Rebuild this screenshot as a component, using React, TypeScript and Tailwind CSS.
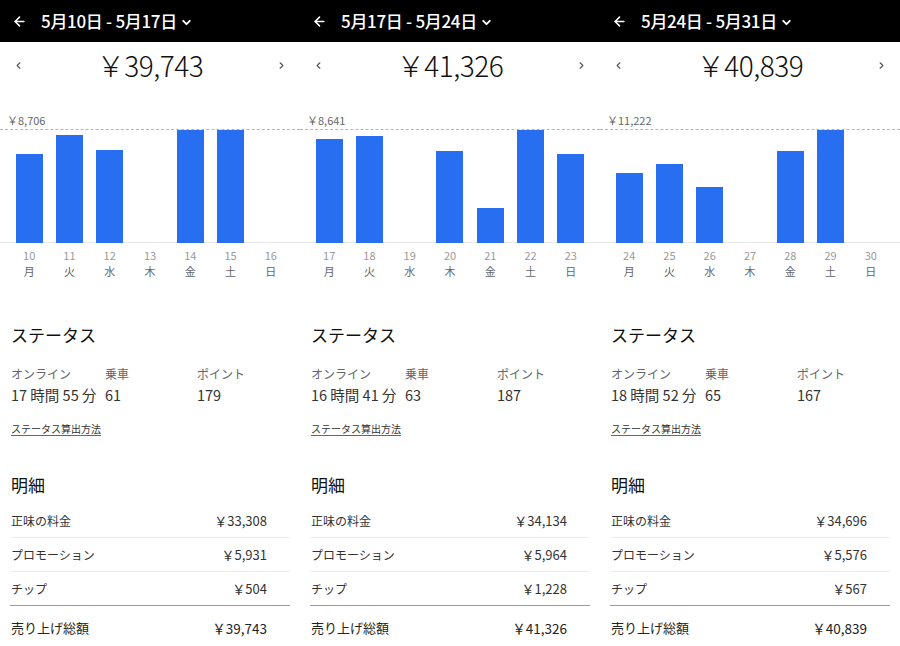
import React from "react";
import { ArrowLeft, ChevronDown, ChevronLeft, ChevronRight } from "lucide-react";

interface WeekData {
  title: string;
  total: string;
  max: string;
  days: number[];
  bars: number[]; // bar heights in px, 113 = max
  online: string;
  rides: string;
  points: string;
  fare: string;
  promo: string;
  tip: string;
}

const weekdays = ["月", "火", "水", "木", "金", "土", "日"];

const weeks: WeekData[] = [
  {
    title: "5月10日 - 5月17日",
    total: "39,743",
    max: "8,706",
    days: [10, 11, 12, 13, 14, 15, 16],
    bars: [89, 108, 93, 0, 113, 113, 0],
    online: "17 時間 55 分",
    rides: "61",
    points: "179",
    fare: "33,308",
    promo: "5,931",
    tip: "504",
  },
  {
    title: "5月17日 - 5月24日",
    total: "41,326",
    max: "8,641",
    days: [17, 18, 19, 20, 21, 22, 23],
    bars: [104, 107, 0, 92, 35, 113, 89],
    online: "16 時間 41 分",
    rides: "63",
    points: "187",
    fare: "34,134",
    promo: "5,964",
    tip: "1,228",
  },
  {
    title: "5月24日 - 5月31日",
    total: "40,839",
    max: "11,222",
    days: [24, 25, 26, 27, 28, 29, 30],
    bars: [70, 79, 56, 0, 92, 113, 0],
    online: "18 時間 52 分",
    rides: "65",
    points: "167",
    fare: "34,696",
    promo: "5,576",
    tip: "567",
  },
];

const Row = ({ label, value, last }: { label: string; value: string; last?: boolean }) => (
  <div
    className={
      last
        ? "flex h-[34px] items-center justify-between border-b border-[#9a9a9a] pl-[1px] pr-[23px]"
        : "flex h-[34px] items-center justify-between border-b border-[#ececec] pl-[1px] pr-[23px]"
    }
  >
    <span className="text-[12px] text-[#333]">{label}</span>
    <span className="text-[13px] text-[#333]">￥{value}</span>
  </div>
);

const Panel = ({ week }: { week: WeekData }) => (
  <div className="w-[300px] shrink-0 bg-white">
    {/* header */}
    <div className="flex h-[42px] items-center bg-black pl-[12px] text-white">
      <ArrowLeft size={15} strokeWidth={2.5} />
      <span className="ml-[14px] text-[17px] font-medium tracking-[-0.3px]">{week.title}</span>
      <ChevronDown size={13} strokeWidth={3.5} className="ml-[3px] mt-[2px]" />
    </div>

    {/* amount */}
    <div className="flex h-[46px] items-center justify-between px-[13px] text-[#555]">
      <ChevronLeft size={11} strokeWidth={2.5} />
      <span className="text-[28px] font-light tracking-[-0.5px] text-[#111]">￥{week.total}</span>
      <ChevronRight size={11} strokeWidth={2.5} />
    </div>

    {/* chart */}
    <div className="pt-[26px]">
      <div className="px-[7px] text-[11px] leading-[13px] text-[#666]">￥{week.max}</div>
      <div className="mt-[2px] grid h-[114px] grid-cols-7 items-end border-t border-b border-t-[#b5b5b5] border-b-[#e6e6e6] px-[9px] [border-top-style:dashed]">
        {week.bars.map((h, i) => (
          <div key={i} className="flex justify-center">
            {h > 0 && <div className="w-[27px] bg-[#276ef1]" style={{ height: h }} />}
          </div>
        ))}
      </div>
      <div className="grid grid-cols-7 px-[9px] pt-[4px]">
        {week.days.map((d, i) => (
          <div key={d} className="flex flex-col items-center text-[11px] leading-[16px]">
            <span className="text-[#999]">{d}</span>
            <span className="text-[#666]">{weekdays[i]}</span>
          </div>
        ))}
      </div>
    </div>

    {/* status */}
    <div className="px-[10px]">
      <div className="mt-[43px] pl-[1px] text-[17px] leading-[26px] text-[#111]">ステータス</div>
      <div className="mt-[17px] flex pl-[1px]">
        <div className="w-[94px]">
          <div className="text-[12px] leading-[18px] text-[#666]">オンライン</div>
          <div className="mt-[2px] text-[14.5px] leading-[20px] text-[#333]">{week.online}</div>
        </div>
        <div className="w-[92px]">
          <div className="text-[12px] leading-[18px] text-[#666]">乗車</div>
          <div className="mt-[2px] text-[14.5px] leading-[20px] text-[#333]">{week.rides}</div>
        </div>
        <div>
          <div className="text-[12px] leading-[18px] text-[#666]">ポイント</div>
          <div className="mt-[2px] text-[14.5px] leading-[20px] text-[#333]">{week.points}</div>
        </div>
      </div>
      <div className="mt-[17px] pl-[1px] text-[10px] leading-[14px] text-[#333] underline underline-offset-2 decoration-[#666]">
        ステータス算出方法
      </div>

      {/* breakdown */}
      <div className="mt-[36px] pl-[1px] text-[17px] leading-[26px] text-[#111]">明細</div>
      <div className="mt-[6px]">
        <Row label="正味の料金" value={week.fare} />
        <Row label="プロモーション" value={week.promo} />
        <Row label="チップ" value={week.tip} last />
        <div className="flex h-[44px] items-center justify-between pl-[1px] pr-[23px]">
          <span className="text-[13px] text-[#222]">売り上げ総額</span>
          <span className="text-[13.5px] text-[#222]">￥{week.total}</span>
        </div>
      </div>
    </div>
  </div>
);

export default function App() {
  return (
    <div
      className="flex h-[646px] w-[900px] items-start overflow-hidden bg-white"
      style={{ fontFamily: '"Noto Sans CJK JP", "Noto Sans", sans-serif' }}
    >
      {weeks.map((w) => (
        <Panel key={w.title} week={w} />
      ))}
    </div>
  );
}
